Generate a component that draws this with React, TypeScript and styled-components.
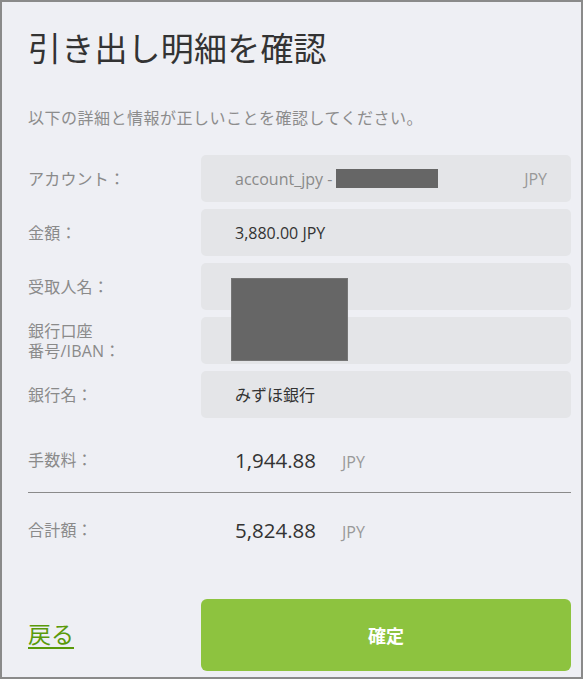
import React from "react";
import styled, { createGlobalStyle } from "styled-components";

const Global = createGlobalStyle`
  html, body { margin: 0; padding: 0; }
  body {
    background: #eeeff4;
    font-family: "Open Sans", "Noto Sans CJK JP", sans-serif;
  }
  * { box-sizing: border-box; }
`;

const Panel = styled.div`
  width: 583px;
  height: 679px;
  border: 2px solid #8a8a8a;
  background: #eeeff4;
  padding: 25px 10px 0 26px;
  display: flex;
  flex-direction: column;
`;

const Title = styled.h1`
  margin: 0;
  font-family: "Noto Sans CJK JP", sans-serif;
  font-weight: 400;
  font-size: 33px;
  line-height: 40px;
  color: #333333;
  letter-spacing: 0.2px;
`;

const Subtitle = styled.p`
  margin: 38px 0 0;
  font-family: "Noto Sans CJK JP", sans-serif;
  font-size: 16px;
  line-height: 24px;
  color: #8c8c8c;
  letter-spacing: 0.5px;
`;

const Rows = styled.div`
  position: relative;
  margin-top: 26px;
  display: grid;
  grid-template-columns: 173px 370px;
  grid-auto-rows: 47px;
  row-gap: 7px;
`;

const Label = styled.div`
  display: flex;
  align-items: center;
  font-family: "Open Sans", "Noto Sans CJK JP", sans-serif;
  font-size: 16px;
  line-height: 20px;
  color: #8a8a8a;
  letter-spacing: 0.2px;
`;

const Field = styled.div<{ $muted?: boolean }>`
  display: flex;
  align-items: center;
  justify-content: space-between;
  padding: 0 24px 0 34px;
  background: #e4e5e8;
  border-radius: 5px;
  font-size: 16px;
  line-height: 22px;
  color: ${(p) => (p.$muted ? "#8a8a8a" : "#333333")};
`;

const FieldText = styled.span`
  display: inline-flex;
  align-items: center;
`;

const Currency = styled.span`
  color: #999999;
  font-size: 16px;
`;

const InlineMask = styled.span`
  display: inline-block;
  width: 102px;
  height: 19px;
  margin-left: 4px;
  background: #666666;
`;

const BlockMask = styled.div`
  position: absolute;
  left: 203px;
  top: 123px;
  width: 117px;
  height: 83px;
  background: #666666;
  border: 1px solid #767676;
`;

const SummaryRow = styled.div<{ $gap: number }>`
  display: grid;
  grid-template-columns: 173px 370px;
  height: 40px;
  margin-top: ${(p) => p.$gap}px;
`;

const Amount = styled.div`
  display: flex;
  align-items: baseline;
  align-self: center;
  padding-left: 34px;
`;

const AmountValue = styled.span`
  font-size: 20.5px;
  color: #333333;
`;

const AmountCurrency = styled.span`
  margin-left: 26px;
  font-size: 16px;
  color: #999999;
`;

const Divider = styled.hr`
  margin: 12px 0 0;
  border: 0;
  height: 1px;
  width: 543px;
  background: #8a8a8a;
`;

const Footer = styled.div`
  display: grid;
  grid-template-columns: 173px 370px;
  height: 72px;
  margin-top: 49px;
`;

const BackLink = styled.a`
  align-self: center;
  justify-self: start;
  margin-top: -4px;
  font-family: "Noto Sans CJK JP", sans-serif;
  font-size: 23px;
  line-height: 28px;
  color: #5a9a0a;
  text-decoration: underline;
  text-decoration-thickness: 2px;
  text-underline-offset: 4px;
  cursor: pointer;
`;

const ConfirmButton = styled.button`
  border: 0;
  border-radius: 6px;
  background: #8dc33f;
  color: #ffffff;
  font-family: "Noto Sans CJK JP", sans-serif;
  font-weight: 700;
  font-size: 18px;
  cursor: pointer;
`;

const rows: { label: React.ReactNode; content: React.ReactNode; muted?: boolean }[] = [
  {
    label: "アカウント：",
    muted: true,
    content: (
      <>
        <FieldText>
          account_jpy -<InlineMask />
        </FieldText>
        <Currency>JPY</Currency>
      </>
    ),
  },
  { label: "金額：", content: <FieldText>3,880.00 JPY</FieldText> },
  { label: "受取人名：", content: null },
  {
    label: (
      <span>
        銀行口座
        <br />
        番号/IBAN：
      </span>
    ),
    content: null,
  },
  { label: "銀行名：", content: <FieldText>みずほ銀行</FieldText> },
];

export default function App() {
  return (
    <>
      <Global />
      <Panel>
        <Title>引き出し明細を確認</Title>
        <Subtitle>以下の詳細と情報が正しいことを確認してください。</Subtitle>
        <Rows>
          {rows.map((r, i) => (
            <React.Fragment key={i}>
              <Label>{r.label}</Label>
              <Field $muted={r.muted}>{r.content}</Field>
            </React.Fragment>
          ))}
          <BlockMask />
        </Rows>
        <SummaryRow $gap={22}>
          <Label>手数料：</Label>
          <Amount>
            <AmountValue>1,944.88</AmountValue>
            <AmountCurrency>JPY</AmountCurrency>
          </Amount>
        </SummaryRow>
        <Divider />
        <SummaryRow $gap={17}>
          <Label>合計額：</Label>
          <Amount>
            <AmountValue>5,824.88</AmountValue>
            <AmountCurrency>JPY</AmountCurrency>
          </Amount>
        </SummaryRow>
        <Footer>
          <BackLink>戻る</BackLink>
          <ConfirmButton>確定</ConfirmButton>
        </Footer>
      </Panel>
    </>
  );
}
